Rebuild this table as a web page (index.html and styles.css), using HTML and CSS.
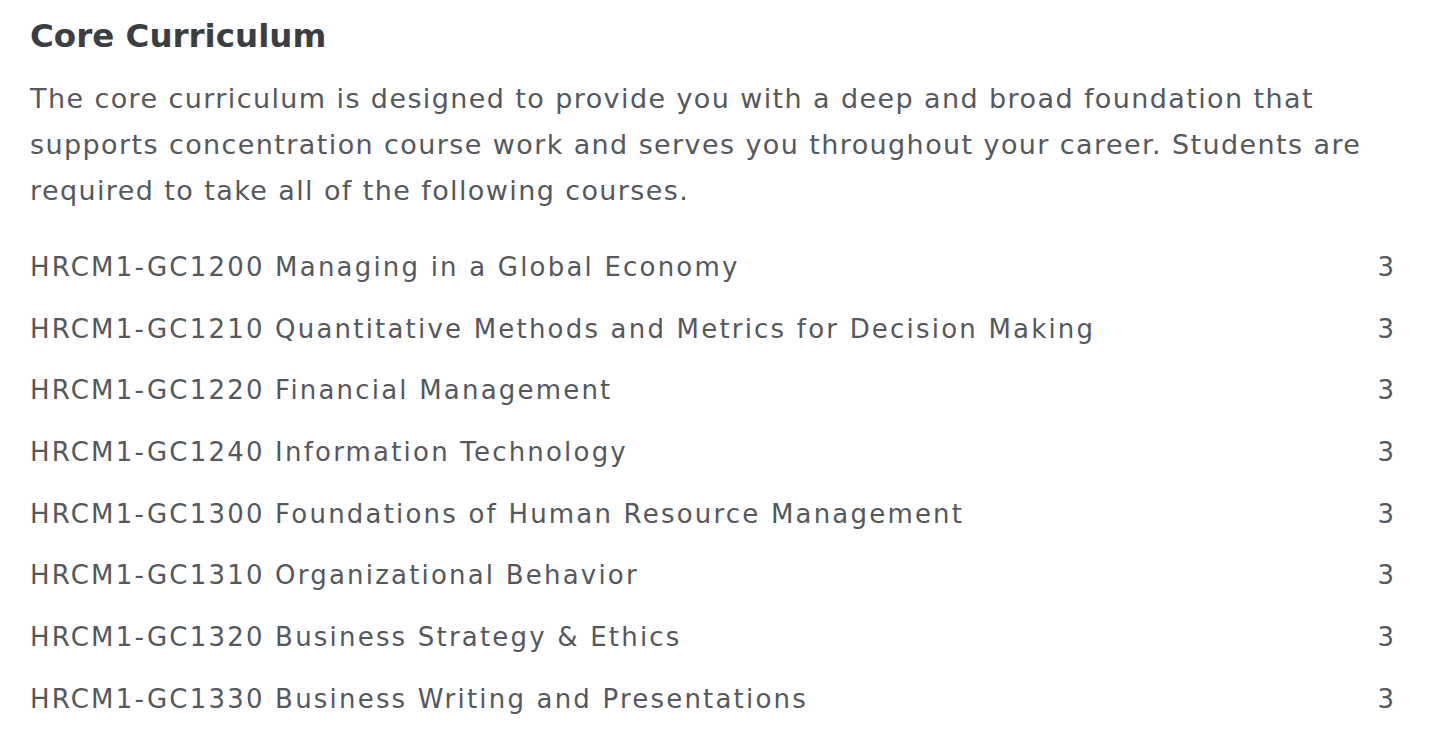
FILE: index.html
```html
<!DOCTYPE html>
<html lang="en">
<head>
<meta charset="utf-8">
<title>Core Curriculum</title>
<link rel="stylesheet" href="styles.css">
</head>
<body>
<section class="core">
  <h2 class="core-title">Core Curriculum</h2>
  <p class="core-intro">The core curriculum is designed to provide you with a deep and broad foundation that supports concentration course work and serves you throughout your career. Students are required to take all of the following courses.</p>
  <ul class="course-list">
    <li class="course"><span class="course-name">HRCM1-GC1200 Managing in a Global Economy</span><span class="course-credits">3</span></li>
    <li class="course"><span class="course-name">HRCM1-GC1210 Quantitative Methods and Metrics for Decision Making</span><span class="course-credits">3</span></li>
    <li class="course"><span class="course-name">HRCM1-GC1220 Financial Management</span><span class="course-credits">3</span></li>
    <li class="course"><span class="course-name">HRCM1-GC1240 Information Technology</span><span class="course-credits">3</span></li>
    <li class="course"><span class="course-name">HRCM1-GC1300 Foundations of Human Resource Management</span><span class="course-credits">3</span></li>
    <li class="course"><span class="course-name">HRCM1-GC1310 Organizational Behavior</span><span class="course-credits">3</span></li>
    <li class="course"><span class="course-name">HRCM1-GC1320 Business Strategy &amp; Ethics</span><span class="course-credits">3</span></li>
    <li class="course"><span class="course-name">HRCM1-GC1330 Business Writing and Presentations</span><span class="course-credits">3</span></li>
  </ul>
</section>
</body>
</html>
```

FILE: styles.css
```css
html, body {
  margin: 0;
  padding: 0;
  background: #ffffff;
}
body {
  font-family: "DejaVu Sans", "Liberation Sans", sans-serif;
  color: #55585d;
}
.core {
  width: 1364px;
  padding: 14px 0 0 30px;
}
.core-title {
  margin: 0;
  font-size: 32.5px;
  line-height: 44px;
  font-weight: 700;
  color: #3b3e43;
}
.core-intro {
  width: 1370px;
  margin: 18px 0 0;
  font-size: 27px;
  line-height: 46px;
  letter-spacing: 1.4px;
  color: #55585d;
}
.course-list {
  list-style: none;
  margin: 22px 0 0;
  padding: 0;
}
.course {
  display: flex;
  justify-content: space-between;
  align-items: center;
  height: 61.7px;
  font-size: 26px;
  letter-spacing: 2.2px;
}
.course-credits {
  letter-spacing: 0;
}
```
